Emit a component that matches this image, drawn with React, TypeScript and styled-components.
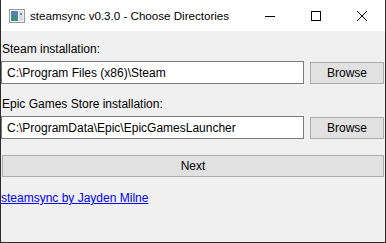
import { createGlobalStyle, styled } from "styled-components";

const GlobalStyle = createGlobalStyle`
  html, body {
    margin: 0;
    padding: 0;
    background: #ffffff;
  }
  * {
    box-sizing: border-box;
  }
`;

const FONT = `"Liberation Sans", Arial, sans-serif`;

const AppIcon = () => (
  <svg width="16" height="14" viewBox="0 0 16 14">
    <rect x="0.5" y="0.5" width="15" height="13" fill="#f4f4f4" stroke="#9a9a9a" />
    <rect x="2" y="2" width="7" height="10" fill="#3f8f86" />
    <rect x="2" y="2" width="7" height="4" fill="#5a7fb5" />
    <rect x="10" y="2" width="4" height="10" fill="#d8dde2" />
    <rect x="11" y="4" width="2" height="2" fill="#7a8a9a" />
  </svg>
);

const MinimizeIcon = () => (
  <svg width="12" height="12" viewBox="0 0 12 12">
    <path d="M1 6.5h10" stroke="#000" strokeWidth="1" />
  </svg>
);

const MaximizeIcon = () => (
  <svg width="12" height="12" viewBox="0 0 12 12">
    <rect x="1.5" y="1.5" width="9" height="9" fill="none" stroke="#000" strokeWidth="1" />
  </svg>
);

const CloseIcon = () => (
  <svg width="12" height="12" viewBox="0 0 12 12">
    <path d="M1 1l10 10M11 1L1 11" stroke="#000" strokeWidth="1" />
  </svg>
);

export default function App() {
  return (
    <>
      <GlobalStyle />
      <Window>
        <TitleBar>
          <TitleIcon>
            <AppIcon />
          </TitleIcon>
          <TitleText>steamsync v0.3.0 - Choose Directories</TitleText>
          <Controls>
            <ControlButton>
              <MinimizeIcon />
            </ControlButton>
            <ControlButton>
              <MaximizeIcon />
            </ControlButton>
            <ControlButton>
              <CloseIcon />
            </ControlButton>
          </Controls>
        </TitleBar>
        <Client>
          <Fields>
            <Field>
              <Label>Steam installation:</Label>
              <PathRow>
                <PathInput defaultValue="C:\Program Files (x86)\Steam" />
                <Button>Browse</Button>
              </PathRow>
            </Field>
            <Field>
              <Label>Epic Games Store installation:</Label>
              <PathRow>
                <PathInput defaultValue="C:\ProgramData\Epic\EpicGamesLauncher" />
                <Button>Browse</Button>
              </PathRow>
            </Field>
          </Fields>
          <NextButton>Next</NextButton>
          <Credit href="#">steamsync by Jayden Milne</Credit>
        </Client>
      </Window>
    </>
  );
}

const Window = styled.div`
  width: 386px;
  height: 243px;
  display: flex;
  flex-direction: column;
  font-family: ${FONT};
  font-size: 12px;
  color: #000;
  border: 1px solid #2d2d2d;
  border-top: none;
  overflow: hidden;
`;

const TitleBar = styled.div`
  height: 31px;
  flex: none;
  display: flex;
  align-items: center;
  background: #ffffff;
`;

const TitleIcon = styled.div`
  width: 16px;
  height: 14px;
  margin-left: 8px;
  margin-right: 5px;
  display: flex;
`;

const TitleText = styled.div`
  flex: 1;
  font-size: 11.6px;
  line-height: 16px;
  white-space: nowrap;
`;

const Controls = styled.div`
  display: flex;
  height: 100%;
`;

const ControlButton = styled.div`
  width: 46px;
  height: 100%;
  display: flex;
  align-items: center;
  justify-content: center;
`;

const Client = styled.div`
  flex: 1;
  background: #f0f0f0;
  display: flex;
  flex-direction: column;
  padding-top: 11px;
`;

const Fields = styled.div`
  display: flex;
  flex-direction: column;
  gap: 13px;
  margin-bottom: 16px;
`;

const Field = styled.div`
  display: flex;
  flex-direction: column;
`;

const Label = styled.div`
  line-height: 15px;
  padding-left: 1px;
  margin-bottom: 4px;
`;

const PathRow = styled.div`
  display: flex;
  align-items: center;
  gap: 6px;
  padding-right: 1px;
`;

const PathInput = styled.input`
  flex: 1;
  min-width: 0;
  height: 23px;
  border: 1px solid #7a7a7a;
  background: #ffffff;
  padding: 0 0 0 5px;
  font-family: ${FONT};
  font-size: 12px;
  color: #000;
  outline: none;
`;

const Button = styled.button`
  width: 74px;
  height: 22px;
  border: 1px solid #adadad;
  background: #e1e1e1;
  font-family: ${FONT};
  font-size: 12px;
  color: #000;
  padding: 0;
`;

const NextButton = styled(Button)`
  width: auto;
  margin: 0 1px;
`;

const Credit = styled.a`
  margin-top: 14px;
  align-self: flex-start;
  color: #0000ff;
  text-decoration: underline;
  line-height: 15px;
`;
